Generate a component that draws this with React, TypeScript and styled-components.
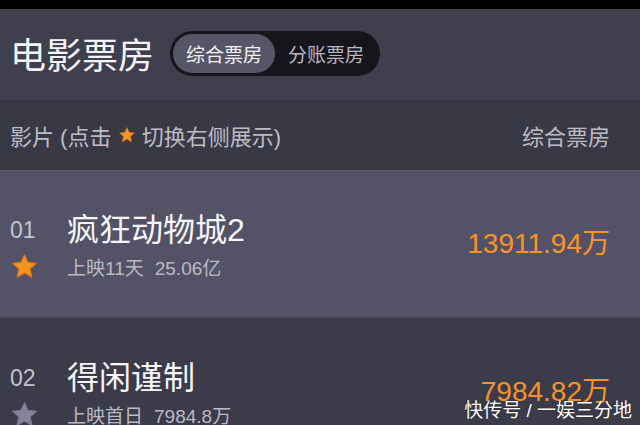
import React from 'react'
import styled, { createGlobalStyle } from 'styled-components'

const GlobalStyle = createGlobalStyle`
  html, body {
    margin: 0;
    padding: 0;
    background: #3c3b4a;
    font-family: "Liberation Sans", "Noto Sans CJK SC", sans-serif;
  }
`

const Page = styled.div`
  position: relative;
  width: 640px;
  height: 425px;
  overflow: hidden;
  background: #3c3b4a;
  border-top: 9px solid #000;
  box-sizing: border-box;
`

const Header = styled.div`
  height: 91px;
  background: #403f4e;
  display: flex;
  align-items: center;
  padding: 0 10px;
  gap: 16px;
`

const Title = styled.h1`
  margin: -3px 0 0;
  font-size: 36px;
  font-weight: 400;
  color: #f4f4f8;
`

const Toggle = styled.div`
  display: flex;
  align-items: center;
  height: 45px;
  padding: 0 3px;
  box-sizing: border-box;
  border-radius: 23px;
  background: #16151c;
  margin-top: -2px;
`

const ToggleItem = styled.div<{ active?: boolean }>`
  height: 39px;
  display: flex;
  align-items: center;
  padding: 0 13px;
  border-radius: 20px;
  font-size: 19px;
  color: ${({ active }) => (active ? '#f2f2f6' : '#b9b8c2')};
  background: ${({ active }) => (active ? '#575667' : 'transparent')};
`

const SubHeader = styled.div`
  height: 70px;
  background: #393845;
  display: flex;
  align-items: center;
  justify-content: space-between;
  padding: 0 30px 0 10px;
  font-size: 22px;
  color: #bdbcc6;
`

const Hint = styled.span`
  display: flex;
  align-items: center;
`

const Row = styled.div<{ active?: boolean }>`
  height: 148px;
  box-sizing: border-box;
  display: flex;
  align-items: center;
  padding: 8px 30px 0 10px;
  background: ${({ active }) => (active ? '#535267' : '#3c3b4a')};
  border-top: 1px solid ${({ active }) => (active ? '#5d5c71' : '#3c3b4a')};
  border-bottom: 1px solid ${({ active }) => (active ? '#484759' : '#3c3b4a')};
`

const Rank = styled.div`
  width: 57px;
  display: grid;
  grid-template-rows: 36px 36px;
  align-items: center;
  font-size: 23px;
  color: #c3c2cc;
`

const Info = styled.div`
  flex: 1;
  display: grid;
  grid-template-rows: 36px 36px;
  align-items: center;
`

const Name = styled.div`
  font-size: 32px;
  color: #f6f6fa;
  line-height: 36px;
`

const Meta = styled.div`
  display: flex;
  gap: 11px;
  font-size: 19px;
  color: #bbbac4;
`

const Amount = styled.div`
  font-size: 28px;
  color: #f6932a;
  margin-top: -15px;
`

const Watermark = styled.div`
  position: absolute;
  right: 8px;
  bottom: 3px;
  font-size: 19px;
  color: #ffffff;
  text-shadow: 0 0 2px rgba(0, 0, 0, 0.4);
`

const Star = ({ size, color, stroke }: { size: number; color: string; stroke: string }) => (
  <svg width={size} height={size} viewBox="0 0 24 24">
    <path
      d="M12 2.2l2.9 6.4 6.9.7-5.2 4.7 1.5 6.9L12 17.4l-6.1 3.5 1.5-6.9-5.2-4.7 6.9-.7z"
      fill={color}
      stroke={stroke}
      strokeWidth="1"
      strokeLinejoin="round"
    />
  </svg>
)

const movies = [
  { rank: '01', name: '疯狂动物城2', days: '上映11天', total: '25.06亿', amount: '13911.94万', fav: true },
  { rank: '02', name: '得闲谨制', days: '上映首日', total: '7984.8万', amount: '7984.82万', fav: false },
]

export default function App() {
  return (
    <>
      <GlobalStyle />
      <Page>
        <Header>
          <Title>电影票房</Title>
          <Toggle>
            <ToggleItem active>综合票房</ToggleItem>
            <ToggleItem>分账票房</ToggleItem>
          </Toggle>
        </Header>
        <SubHeader>
          <Hint>
            影片 (点击&nbsp;<Star size={18} color="#f6932a" stroke="#d9781a" />&nbsp;切换右侧展示)
          </Hint>
          <span>综合票房</span>
        </SubHeader>
        {movies.map((m, i) => (
          <Row key={m.rank} active={i === 0}>
            <Rank>
              <span>{m.rank}</span>
              <Star
                size={29}
                color={m.fav ? '#f7941d' : '#85849a'}
                stroke={m.fav ? '#d6761a' : '#7a798e'}
              />
            </Rank>
            <Info>
              <Name>{m.name}</Name>
              <Meta>
                <span>{m.days}</span>
                <span>{m.total}</span>
              </Meta>
            </Info>
            <Amount>{m.amount}</Amount>
          </Row>
        ))}
        <Watermark>快传号 / 一娱三分地</Watermark>
      </Page>
    </>
  )
}
